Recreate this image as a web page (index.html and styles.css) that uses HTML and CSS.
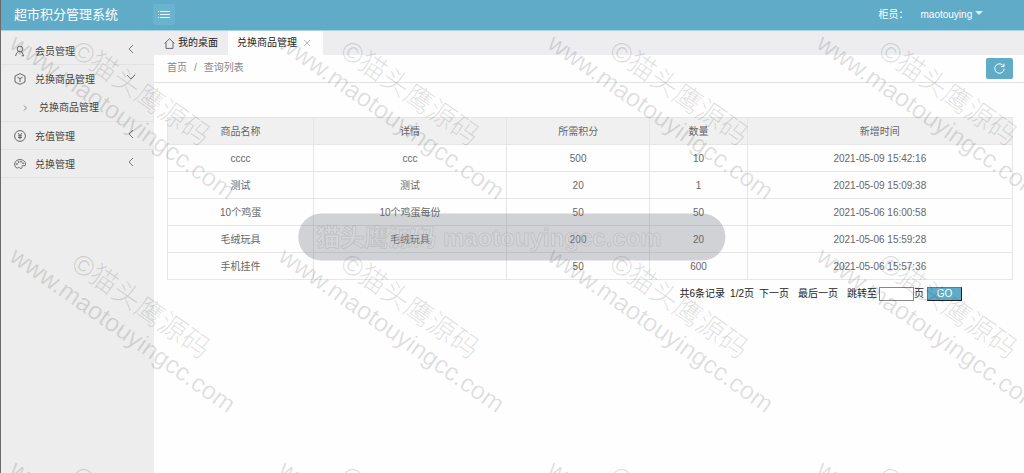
FILE: index.html
```html
<!DOCTYPE html>
<html lang="zh-CN">
<head>
<meta charset="UTF-8">
<meta name="viewport" content="width=device-width, initial-scale=1.0">
<title>超市积分管理系统</title>
<link rel="stylesheet" href="styles.css">
</head>
<body>

<header class="header">
    <div class="logo">超市积分管理系统</div>
    <button class="toggle" type="button" aria-label="菜单">
        <svg width="12" height="8" viewBox="0 0 12 8"><path d="M0 .5h1M2 .5h10M0 3.5h1M2 3.5h10M0 6.5h1M2 6.5h10" stroke="#e9f5f9"/></svg>
    </button>
    <div class="user">
        <span>柜员：</span>
        <a href="#">maotouying <i class="caret"></i></a>
    </div>
</header>

<div class="main">
    <nav class="sidebar">
        <a class="item" href="#">
            <svg class="icon" viewBox="0 0 12 12"><circle cx="6" cy="4" r="2.8"/><path d="M4.6 6.4 Q2 7.6 1.6 11 M7.4 6.4 L9.8 10.8 H7.6"/></svg>
            <span>会员管理</span>
            <svg class="arrow" viewBox="0 0 8 8"><path d="M6 0 L2 4 L6 8"/></svg>
        </a>
        <a class="item open" href="#">
            <svg class="icon" viewBox="0 0 12 12"><path d="M6 .6 L11 3 V9 L6 11.4 L1 9 V3 Z M3.4 4.2 L6 5.6 L8.6 4.2 M6 5.6 V9"/></svg>
            <span>兑换商品管理</span>
            <svg class="arrow" viewBox="0 0 8 8"><path d="M0 2 L4 6 L8 2"/></svg>
        </a>
        <a class="subitem" href="#">
            <svg class="mark" viewBox="0 0 8 8"><path d="M3 1.5 L5.5 4 L3 6.5"/></svg>
            <span>兑换商品管理</span>
        </a>
        <a class="item" href="#">
            <svg class="icon" viewBox="0 0 12 12"><circle cx="6" cy="6" r="5.4"/><path d="M4 3 L6 5.4 L8 3 M6 5.4 V9.4 M4 5.8 H8 M4 7.5 H8"/></svg>
            <span>充值管理</span>
            <svg class="arrow" viewBox="0 0 8 8"><path d="M6 0 L2 4 L6 8"/></svg>
        </a>
        <a class="item" href="#">
            <svg class="icon" viewBox="0 0 12 12"><path d="M2.6 10 C-1 7 .8 1.6 6 1.6 C10 1.6 12 4.4 11.4 7 C11 8.8 9.4 7 8.4 7.6 C7.2 8.4 9 9.6 7.4 10.4 C6.4 10.8 5.6 9.4 4.6 9.4 C3.8 9.4 3.4 10.6 2.6 10 Z"/><circle cx="3" cy="6" r=".5"/><circle cx="4.6" cy="4" r=".5"/><circle cx="7" cy="3.8" r=".5"/><circle cx="9" cy="5.2" r=".5"/></svg>
            <span>兑换管理</span>
            <svg class="arrow" viewBox="0 0 8 8"><path d="M6 0 L2 4 L6 8"/></svg>
        </a>
    </nav>

    <div class="content">
        <div class="tabs">
            <a class="tab" href="#">
                <svg class="home" viewBox="0 0 11 11"><path d="M.6 5.4 L5.5 .8 L10.4 5.4 M2 4.4 V10.4 H9 V4.4"/></svg>
                <span>我的桌面</span>
            </a>
            <a class="tab active" href="#">
                <span>兑换商品管理</span>
                <svg class="close" viewBox="0 0 6 6"><path d="M0 0 L6 6 M6 0 L0 6"/></svg>
            </a>
        </div>

        <div class="crumb">
            <a href="#">首页</a>
            <span>/</span>
            <a href="#">查询列表</a>
            <button class="refresh" type="button" aria-label="刷新">
                <svg width="11" height="11" viewBox="0 0 11 11"><path d="M9.6 3.2 A4.7 4.7 0 1 0 10.2 5.8 M10 .6 V3.6 H7"/></svg>
            </button>
        </div>

        <div class="list">
            <table class="table">
                <colgroup><col class="c-name"><col class="c-detail"><col class="c-point"><col class="c-num"><col></colgroup>
                <thead>
                    <tr><th>商品名称</th><th>详情</th><th>所需积分</th><th>数量</th><th>新增时间</th></tr>
                </thead>
                <tbody>
                    <tr><td>cccc</td><td>ccc</td><td>500</td><td>10</td><td>2021-05-09 15:42:16</td></tr>
                    <tr><td>测试</td><td>测试</td><td>20</td><td>1</td><td>2021-05-09 15:09:38</td></tr>
                    <tr><td>10个鸡蛋</td><td>10个鸡蛋每份</td><td>50</td><td>50</td><td>2021-05-06 16:00:58</td></tr>
                    <tr><td>毛绒玩具</td><td>毛绒玩具</td><td>200</td><td>20</td><td>2021-05-06 15:59:28</td></tr>
                    <tr><td>手机挂件</td><td></td><td>50</td><td>600</td><td>2021-05-06 15:57:36</td></tr>
                </tbody>
            </table>

            <form class="pager">
                <span>共6条记录</span>
                <span>1/2页</span>
                <a class="next" href="#">下一页</a>
                <a class="last" href="#">最后一页</a>
                <label for="page">跳转至</label>
                <input id="page" type="text">
                <span class="unit">页</span>
                <button class="go" type="button">GO</button>
            </form>
        </div>
    </div>
</div>

<!-- watermark -->
<div class="watermark" aria-hidden="true">
    <div class="mark-cell"><p class="mark-name">©猫头鹰源码</p><p class="mark-url">www.maotouyingcc.com</p></div>
    <div class="mark-cell"><p class="mark-name">©猫头鹰源码</p><p class="mark-url">www.maotouyingcc.com</p></div>
    <div class="mark-cell"><p class="mark-name">©猫头鹰源码</p><p class="mark-url">www.maotouyingcc.com</p></div>
    <div class="mark-cell"><p class="mark-name">©猫头鹰源码</p><p class="mark-url">www.maotouyingcc.com</p></div>
    <div class="mark-cell"><p class="mark-name">©猫头鹰源码</p><p class="mark-url">www.maotouyingcc.com</p></div>
    <div class="mark-cell"><p class="mark-name">©猫头鹰源码</p><p class="mark-url">www.maotouyingcc.com</p></div>
    <div class="mark-cell"><p class="mark-name">©猫头鹰源码</p><p class="mark-url">www.maotouyingcc.com</p></div>
    <div class="mark-cell"><p class="mark-name">©猫头鹰源码</p><p class="mark-url">www.maotouyingcc.com</p></div>
    <div class="mark-cell"><p class="mark-name">©猫头鹰源码</p><p class="mark-url">www.maotouyingcc.com</p></div>
    <div class="mark-cell"><p class="mark-name">©猫头鹰源码</p><p class="mark-url">www.maotouyingcc.com</p></div>
    <div class="mark-cell"><p class="mark-name">©猫头鹰源码</p><p class="mark-url">www.maotouyingcc.com</p></div>
    <div class="mark-cell"><p class="mark-name">©猫头鹰源码</p><p class="mark-url">www.maotouyingcc.com</p></div>
</div>
<div class="pill">猫头鹰源码 maotouyingcc.com</div>

</body>
</html>
```

FILE: styles.css
```css
* {
    box-sizing: border-box;
}
body {
    margin: 0;
    min-height: 100vh;
    display: flex;
    flex-direction: column;
    border-left: 1px solid #6b6b6b;
    background-color: #fefefe;
    color: #444;
    font: 10px/14px "Liberation Sans", "Noto Sans CJK SC", sans-serif;
}
a {
    color: inherit;
    text-decoration: none;
}
button, input {
    font: inherit;
    padding: 0;
}
svg {
    display: block;
    fill: none;
    stroke: currentColor;
}

/* header */
.header {
    display: flex;
    align-items: center;
    height: 31px;
    padding: 0 41px 1px 13px;
    background-color: #5fabc8;
    border-bottom: 1px solid #a9d3e2;
    color: #fff;
}
.logo {
    width: 139px;
    font-size: 13px;
}
.toggle {
    display: flex;
    align-items: center;
    justify-content: center;
    width: 22px;
    height: 21px;
    border: 0;
    border-radius: 2px;
    background-color: #6ab2ce;
}
.user {
    display: flex;
    gap: 12px;
    margin-left: auto;
}
.caret {
    display: inline-block;
    border: 4px solid transparent;
    border-top-color: #dceef4;
    border-bottom: 0;
    vertical-align: 3px;
}

.main {
    display: flex;
    flex: 1;
}

/* left menu */
.sidebar {
    width: 153px;
    padding-top: 6px;
    background-color: #ededed;
}
.item {
    display: flex;
    align-items: center;
    height: 28px;
    padding: 2px 19px 0 13px;
    border-bottom: 1px solid #e2e2e2;
}
.item.open {
    border-bottom-color: transparent;
}
.icon {
    width: 12px;
    height: 12px;
    margin: 0 9px 2px 0;
    color: #666;
}
.arrow {
    width: 8px;
    height: 8px;
    margin: 0 0 6px auto;
    color: #777;
}
.subitem {
    display: flex;
    align-items: center;
    height: 29px;
    padding: 2px 0 0 20px;
    border-bottom: 1px solid #e2e2e2;
}
.mark {
    width: 8px;
    height: 8px;
    margin-right: 10px;
    color: #888;
}

/* tabs */
.content {
    flex: 1;
    min-width: 0;
}
.tabs {
    display: flex;
    height: 24px;
    background-color: #ededf0;
}
.tab {
    display: flex;
    align-items: center;
    padding: 0 10px;
    color: #222;
}
.tab.active {
    padding: 0 13px 0 9px;
    background-color: #fefefe;
}
.home {
    width: 11px;
    height: 11px;
    margin-right: 3px;
    color: #666;
}
.close {
    width: 6px;
    height: 6px;
    margin-left: 7px;
    color: #bbb;
}
.crumb {
    display: flex;
    align-items: center;
    gap: 7px;
    height: 28px;
    padding: 0 11px 1px 13px;
    border-bottom: 1px solid #e2e2e2;
    color: #888;
}
.refresh {
    display: flex;
    align-items: center;
    justify-content: center;
    width: 27px;
    height: 21px;
    margin-left: auto;
    border: 0;
    border-radius: 2px;
    background-color: #5fabc8;
    color: #fff;
}

/* table */
.list {
    padding: 34px 11px 0 13px;
}
.table {
    width: 100%;
    table-layout: fixed;
    border-collapse: collapse;
    color: #666;
    text-align: center;
}
.c-name {
    width: 17.3%;
}
.c-detail {
    width: 22.8%;
}
.c-point {
    width: 17%;
}
.c-num {
    width: 11.5%;
}
.table th, .table td {
    height: 27px;
    padding: 2px 0 0;
    border: 1px solid #e6e6e6;
    font-weight: normal;
}
.table th {
    background-color: #f0f0f0;
}

/* pager */
.pager {
    display: flex;
    align-items: center;
    justify-content: flex-end;
    margin-top: 7px;
    padding-right: 51px;
    gap: 5px;
    color: #222;
}
.last {
    margin: 0 4px;
}
.pager input {
    width: 35px;
    height: 14px;
    margin-left: -3px;
    border: 1px solid #888;
    background-color: #fff;
}
.unit {
    margin: 0 -2px 0 -5px;
}
.go {
    width: 35px;
    height: 14px;
    border: 1px solid;
    border-color: #4b8299 #222 #222 #4b8299;
    background-color: #5fabc8;
    color: #fff;
    line-height: 12px;
}

/* watermark */
.watermark {
    position: absolute;
    top: 0;
    right: 0;
    bottom: 0;
    left: 0;
    display: grid;
    grid-template-columns: repeat(4, 269px);
    grid-auto-rows: 213px;
    padding-left: 30px;
    overflow: hidden;
    pointer-events: none;
    color: rgba(0, 0, 0, 0.13);
}
.mark-cell {
    width: 280px;
    transform: rotate(35deg);
    transform-origin: 0 0;
    padding-left: 9px;
    white-space: nowrap;
}
.mark-cell p {
    margin: 0;
}
.mark-cell .mark-name {
    margin-top: -2px;
    padding-left: 55px;
    font-size: 28px;
    font-weight: 300;
    line-height: 30px;
}
.mark-url {
    font-size: 25px;
    line-height: 28px;
}
.pill {
    position: fixed;
    top: 50%;
    left: 50%;
    transform: translate(-50%, -50%);
    padding: 1px 64px 0 18px;
    border-radius: 23px;
    background-color: rgba(107, 110, 124, 0.3);
    color: rgba(225, 225, 225, 0.2);
    font-size: 24px;
    font-weight: bold;
    line-height: 46px;
    white-space: nowrap;
    pointer-events: none;
    -webkit-text-stroke: 1px rgba(130, 130, 130, 0.2);
}
```
